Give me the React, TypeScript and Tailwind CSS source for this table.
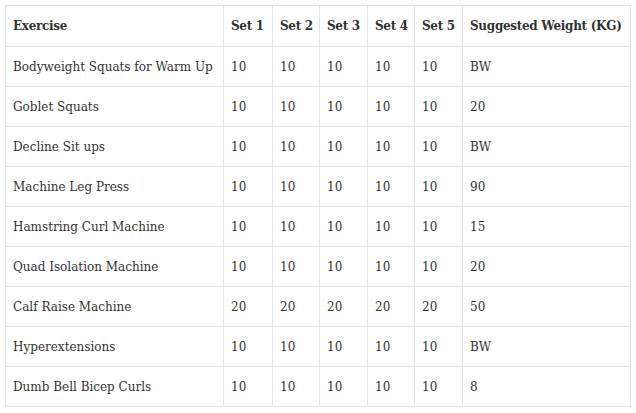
const rows: [string, string[], string][] = [
  ["Bodyweight Squats for Warm Up", ["10", "10", "10", "10", "10"], "BW"],
  ["Goblet Squats", ["10", "10", "10", "10", "10"], "20"],
  ["Decline Sit ups", ["10", "10", "10", "10", "10"], "BW"],
  ["Machine Leg Press", ["10", "10", "10", "10", "10"], "90"],
  ["Hamstring Curl Machine", ["10", "10", "10", "10", "10"], "15"],
  ["Quad Isolation Machine", ["10", "10", "10", "10", "10"], "20"],
  ["Calf Raise Machine", ["20", "20", "20", "20", "20"], "50"],
  ["Hyperextensions", ["10", "10", "10", "10", "10"], "BW"],
  ["Dumb Bell Bicep Curls", ["10", "10", "10", "10", "10"], "8"],
];

export default function App() {
  return (
    <div className="min-h-[413px] bg-white p-[5px] font-['DejaVu_Serif',serif] text-[12px] text-[#333]">
      <table className="w-[626px] table-fixed border-collapse">
        <colgroup>
          <col className="w-[218px]" />
          <col className="w-[49px]" />
          <col className="w-[47px]" />
          <col className="w-[48px]" />
          <col className="w-[47px]" />
          <col className="w-[48px]" />
          <col />
        </colgroup>
        <thead>
          <tr className="h-[41px]">
            {["Exercise", "Set 1", "Set 2", "Set 3", "Set 4", "Set 5", "Suggested Weight (KG)"].map((h) => (
              <th key={h} className="overflow-hidden whitespace-nowrap border border-[#e4e4e4] px-[7px] text-left font-bold tracking-[-0.3px]">
                {h}
              </th>
            ))}
          </tr>
        </thead>
        <tbody>
          {rows.map(([name, sets, w]) => (
            <tr key={name} className="h-[40px]">
              <td className="whitespace-nowrap border border-[#e4e4e4] px-[7px]">{name}</td>
              {sets.map((s, i) => (
                <td key={i} className="border border-[#e4e4e4] px-[7px]">{s}</td>
              ))}
              <td className="border border-[#e4e4e4] px-[7px]">{w}</td>
            </tr>
          ))}
        </tbody>
      </table>
    </div>
  );
}
